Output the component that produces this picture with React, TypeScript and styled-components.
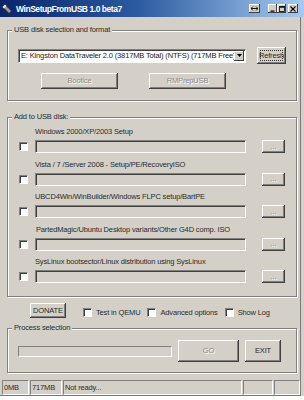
import React from "react";
import styled, { createGlobalStyle } from "styled-components";

const FACE = "#d4d0c8";

const GlobalStyle = createGlobalStyle`
  html, body { margin: 0; padding: 0; background: #ffffff; }
  #root { width: 304px; height: 400px; overflow: hidden; }
  * { box-sizing: border-box; }
`;

const Window = styled.div`
  width: 304px;
  height: 396px;
  background: ${FACE};
  display: flex;
  flex-direction: column;
  font-family: "Liberation Sans", Arial, sans-serif;
  font-size: 7.5px;
  letter-spacing: -0.15px;
  color: #2a2a2a;
`;

const TitleBar = styled.div`
  height: 17px;
  flex: none;
  display: flex;
  align-items: center;
  padding: 0 6px 0 2px;
  background: linear-gradient(to right, #0a246a 0%, #2c5aa0 45%, #a6caf0 100%);
`;

const TitleText = styled.span`
  margin-left: 4px;
  color: #ffffff;
  font-weight: bold;
  font-size: 8.5px;
  letter-spacing: -0.45px;
  white-space: nowrap;
`;

const CaptionGroup = styled.div`
  margin-left: auto;
  display: flex;
  align-items: center;
`;

const CaptionButton = styled.div<{ $w: number; $ml: number }>`
  width: ${(p) => p.$w}px;
  height: 9px;
  margin-left: ${(p) => p.$ml}px;
  background: ${FACE};
  box-shadow: inset -1px -1px 0 #404040, inset 1px 1px 0 #ffffff;
  display: flex;
  align-items: center;
  justify-content: center;
`;

const Client = styled.div`
  width: 301px;
  flex: 1;
  display: flex;
  flex-direction: column;
  border-right: 1px solid #7a7a7a;
  border-bottom: 1px solid #7a7a7a;
`;

const Body = styled.div`
  padding: 13px 3px 0 7px;
  display: flex;
  flex-direction: column;
`;

const Group = styled.div<{ $h: number; $mt: number }>`
  height: ${(p) => p.$h}px;
  margin-top: ${(p) => p.$mt}px;
  border: 1px solid #808080;
  box-shadow: inset 1px 1px 0 #ffffff, 1px 1px 0 #ffffff;
  display: flex;
  flex-direction: column;
`;

const GroupTitle = styled.div`
  align-self: flex-start;
  margin: -6px 0 0 4px;
  padding: 0 2px;
  height: 10px;
  line-height: 10px;
  background: ${FACE};
  white-space: nowrap;
`;

const Row = styled.div<{ $mt: number; $pl: number; $h: number; $gap?: number }>`
  display: flex;
  align-items: center;
  margin-top: ${(p) => p.$mt}px;
  padding-left: ${(p) => p.$pl}px;
  height: ${(p) => p.$h}px;
  gap: ${(p) => p.$gap ?? 0}px;
`;

const Combo = styled.div`
  width: 228px;
  height: 14px;
  background: #ffffff;
  display: flex;
  align-items: center;
  border: 1px solid;
  border-color: #808080 #ffffff #ffffff #808080;
  box-shadow: inset 1px 1px 0 #404040;
  padding: 0 1px 0 2px;
`;

const ComboText = styled.span`
  flex: 1;
  white-space: nowrap;
  overflow: hidden;
  line-height: 12px;
  color: #1a1a1a;
`;

const ComboArrow = styled.div`
  width: 10px;
  height: 10px;
  flex: none;
  background: ${FACE};
  box-shadow: inset -1px -1px 0 #404040, inset 1px 1px 0 #ffffff;
  display: flex;
  align-items: center;
  justify-content: center;
`;

const Button = styled.button<{ $w: number; $h: number; $off?: boolean; $focus?: boolean; $ml?: number }>`
  width: ${(p) => p.$w}px;
  height: ${(p) => p.$h}px;
  margin: 0 0 0 ${(p) => p.$ml ?? 0}px;
  padding: 0;
  flex: none;
  border: none;
  background: ${FACE};
  font: inherit;
  letter-spacing: inherit;
  color: ${(p) => (p.$off ? "#8a8a8a" : "#2a2a2a")};
  text-shadow: ${(p) => (p.$off ? "1px 1px 0 #ffffff" : "none")};
  box-shadow: inset -1px -1px 0 #404040, inset 1px 1px 0 #ffffff, inset -2px -2px 0 #808080;
  outline: ${(p) => (p.$focus ? "1px dotted #333" : "none")};
  outline-offset: -4px;
  line-height: 1;
`;

const ItemList = styled.div`
  margin-top: 5px;
  display: flex;
  flex-direction: column;
  gap: 6.5px;
`;

const Item = styled.div`
  display: flex;
  flex-direction: column;
`;

const ItemLabel = styled.div<{ $indent: number }>`
  height: 10px;
  line-height: 10px;
  padding-left: ${(p) => 27 + p.$indent}px;
  margin-bottom: 3px;
  white-space: nowrap;
`;

const Check = styled.div<{ $mr?: number }>`
  width: 9px;
  height: 9px;
  flex: none;
  margin-right: ${(p) => p.$mr ?? 0}px;
  background: #ffffff;
  border: 1px solid;
  border-color: #808080 #ffffff #ffffff #808080;
  box-shadow: inset 1px 1px 0 #404040;
`;

const PathBox = styled.div`
  width: 211px;
  height: 13px;
  flex: none;
  background: ${FACE};
  border: 1px solid;
  border-color: #808080 #ffffff #ffffff #808080;
  box-shadow: inset 1px 1px 0 #404040;
`;

const BottomRow = styled.div`
  margin-top: 6px;
  height: 15px;
  padding-left: 23px;
  display: flex;
  align-items: center;
`;

const Options = styled.div`
  margin-left: 17px;
  display: flex;
  align-items: center;
  gap: 7px;
`;

const Option = styled.label`
  display: flex;
  align-items: center;
  gap: 4px;
  white-space: nowrap;
  margin-top: 3px;
`;

const Progress = styled.div`
  width: 154px;
  height: 11px;
  flex: none;
  background: ${FACE};
  border: 1px solid;
  border-color: #808080 #ffffff #ffffff #808080;
`;

const StatusBar = styled.div`
  margin-top: 7px;
  height: 15px;
  padding-left: 2px;
  display: flex;
  gap: 1px;
`;

const Panel = styled.div<{ $w: number }>`
  width: ${(p) => p.$w}px;
  height: 15px;
  flex: none;
  border: 1px solid;
  border-color: #808080 #ffffff #ffffff #808080;
  padding-left: 1px;
  line-height: 13px;
  white-space: nowrap;
  overflow: hidden;
`;

const items = [
  { label: "Windows 2000/XP/2003 Setup", indent: 0 },
  { label: "Vista / 7 /Server 2008 - Setup/PE/RecoveryISO", indent: 0 },
  { label: "UBCD4Win/WinBuilder/Windows FLPC setup/BartPE", indent: 0 },
  { label: "PartedMagic/Ubuntu Desktop variants/Other G4D comp. ISO", indent: 1 },
  { label: "SysLinux bootsector/Linux distribution using SysLinux", indent: 0 },
];

const AppIcon = () => (
  <svg width="10" height="10" viewBox="0 0 10 10">
    <path d="M0.5 3 L3 0.5 L9.5 7 L7 9.5 Z" fill="#9a9a9a" stroke="#202020" strokeWidth="0.8" />
    <path d="M0.5 3 L3 0.5 L4.5 2 L2 4.5 Z" fill="#e8e8e8" />
  </svg>
);

export default function App() {
  return (
    <>
      <GlobalStyle />
      <Window>
        <TitleBar>
          <AppIcon />
          <TitleText>WinSetupFromUSB 1.0 beta7</TitleText>
          <CaptionGroup>
            <CaptionButton $w={11} $ml={0}>
              <svg width="7" height="5" viewBox="0 0 7 5">
                <path d="M0 2.5 H7 M0 2.5 L2 0.5 M0 2.5 L2 4.5 M7 2.5 L5 0.5 M7 2.5 L5 4.5" stroke="#000" strokeWidth="0.9" fill="none" />
              </svg>
            </CaptionButton>
            <CaptionButton $w={9} $ml={8}>
              <svg width="5" height="6" viewBox="0 0 5 6">
                <rect x="0.5" y="4.5" width="4" height="1.2" fill="#000" />
              </svg>
            </CaptionButton>
            <CaptionButton $w={9} $ml={0}>
              <svg width="6" height="6" viewBox="0 0 6 6">
                <rect x="0.5" y="0.5" width="5" height="5" fill="none" stroke="#000" strokeWidth="0.8" />
                <rect x="0.5" y="0.5" width="5" height="1.2" fill="#000" />
              </svg>
            </CaptionButton>
            <CaptionButton $w={10} $ml={2}>
              <svg width="6" height="6" viewBox="0 0 6 6">
                <path d="M0.5 0.5 L5.5 5.5 M5.5 0.5 L0.5 5.5" stroke="#000" strokeWidth="1.1" />
              </svg>
            </CaptionButton>
          </CaptionGroup>
        </TitleBar>
        <Client>
          <Body>
            <Group $h={71} $mt={0}>
              <GroupTitle>USB disk selection and format</GroupTitle>
              <Row $mt={12} $pl={10} $h={17}>
                <Combo>
                  <ComboText>E: Kingston DataTraveler 2.0 (3817MB Total) (NTFS) (717MB Free)</ComboText>
                  <ComboArrow>
                    <svg width="5" height="3" viewBox="0 0 5 3">
                      <path d="M0 0 H5 L2.5 3 Z" fill="#000" />
                    </svg>
                  </ComboArrow>
                </Combo>
                <Button $w={29} $h={17} $ml={11} $focus>
                  Refresh
                </Button>
              </Row>
              <Row $mt={9} $pl={33} $h={16} $gap={31}>
                <Button $w={77} $h={16} $off>
                  Bootice
                </Button>
                <Button $w={77} $h={16} $off>
                  RMPrepUSB
                </Button>
              </Row>
            </Group>

            <Group $h={180} $mt={16}>
              <GroupTitle>Add to USB disk:</GroupTitle>
              <ItemList>
                {items.map((it) => (
                  <Item key={it.label}>
                    <ItemLabel $indent={it.indent}>{it.label}</ItemLabel>
                    <Row $mt={0} $pl={11} $h={13}>
                      <Check $mr={7} />
                      <PathBox />
                      <Button $w={23} $h={13} $ml={16} $off>
                        ...
                      </Button>
                    </Row>
                  </Item>
                ))}
              </ItemList>
            </Group>

            <BottomRow>
              <Button $w={36} $h={15}>
                DONATE
              </Button>
              <Options>
                <Option>
                  <Check />
                  Test in QEMU
                </Option>
                <Option>
                  <Check />
                  Advanced options
                </Option>
                <Option>
                  <Check />
                  Show Log
                </Option>
              </Options>
            </BottomRow>

            <Group $h={45} $mt={10}>
              <GroupTitle>Process selection</GroupTitle>
              <Row $mt={7} $pl={10} $h={22} $gap={6}>
                <Progress />
                <Button $w={61} $h={22} $off>
                  GO
                </Button>
                <Button $w={36} $h={22}>
                  EXIT
                </Button>
              </Row>
            </Group>
          </Body>
          <StatusBar>
            <Panel $w={27}>0MB</Panel>
            <Panel $w={32}>717MB</Panel>
            <Panel $w={179}>Not ready...</Panel>
            <Panel $w={30} />
            <Panel $w={26} />
          </StatusBar>
        </Client>
      </Window>
    </>
  );
}
